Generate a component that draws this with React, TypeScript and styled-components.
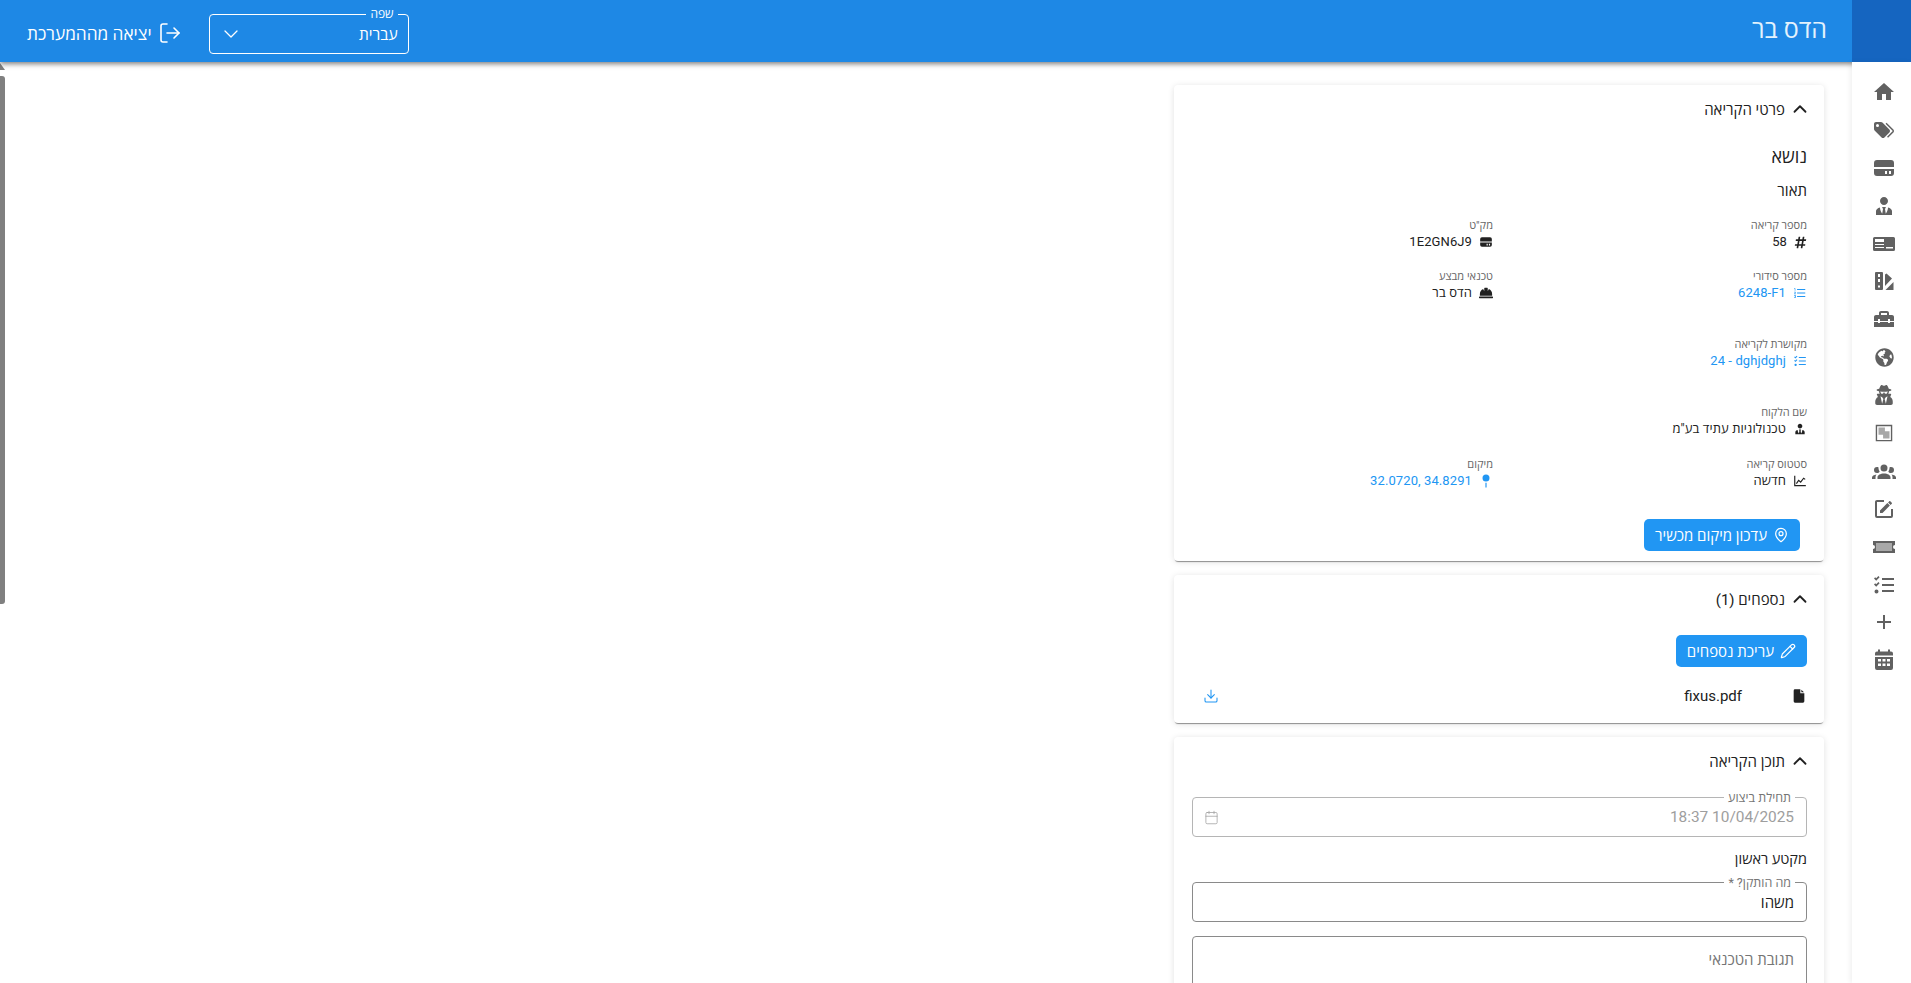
import React from "react";
import styled, { createGlobalStyle } from "styled-components";
import { ChevronDown, ChevronUp, LogOut, MapPin, Pencil, Download, Calendar } from "lucide-react";
import { FaUserSecret, FaHardHat, FaHashtag, FaGlobeAmericas } from "react-icons/fa";

const P = {
  home: "M10,20V14H14V20H19V12H22L12,3L2,12H5V20H10Z",
  tags: "M5.5,9A1.5,1.5 0 0,0 7,7.5A1.5,1.5 0 0,0 5.5,6A1.5,1.5 0 0,0 4,7.5A1.5,1.5 0 0,0 5.5,9M17.41,11.58C17.77,11.94 18,12.44 18,13C18,13.55 17.78,14.05 17.41,14.41L12.41,19.41C12.05,19.77 11.55,20 11,20C10.45,20 9.95,19.78 9.58,19.41L2.59,12.42C2.22,12.05 2,11.55 2,11V6C2,4.89 2.89,4 4,4H9C9.55,4 10.05,4.22 10.41,4.58L17.41,11.58M13.54,5.71L14.54,4.71L21.41,11.58C21.78,11.94 22,12.45 22,13C22,13.55 21.78,14.05 21.42,14.41L16.04,19.79L15.04,18.79L20.75,13L13.54,5.71Z",
  disk: "M5,4H19A3,3 0 0,1 22,7V11H2V7A3,3 0 0,1 5,4ZM2,13H22V17A3,3 0 0,1 19,20H5A3,3 0 0,1 2,17ZM13,15V18H15V15ZM17,15V18H19V15Z",
  tie: "M12 3C14.21 3 16 4.79 16 7S14.21 11 12 11 8 9.21 8 7 9.79 3 12 3M16 13.54C16 14.6 15.72 17.07 13.81 19.83L13 15L13.94 13.12C13.32 13.05 12.67 13 12 13S10.68 13.05 10.06 13.12L11 15L10.19 19.83C8.28 17.07 8 14.6 8 13.54C5.61 14.24 4 15.5 4 17V21H20V17C20 15.5 18.4 14.24 16 13.54Z",
  device: "M2.5,5H21.5A1.5,1.5 0 0,1 23,6.5V17.5A1.5,1.5 0 0,1 21.5,19H2.5A1.5,1.5 0 0,1 1,17.5V6.5A1.5,1.5 0 0,1 2.5,5ZM3,7V10H12V7ZM3,12V13H12V12ZM3,15V16H12V15ZM14,15V16.5H21V15Z",
  swatch: "M4,3H10A1,1 0 0,1 11,4V20A1,1 0 0,1 10,21H4A1,1 0 0,1 3,20V4A1,1 0 0,1 4,3ZM6,5V8H8V5ZM6,10V13H8V10ZM6,16.5V18.5H8V16.5ZM13,5.5L14.5,4.5L20,9.5L13,17ZM21.5,13V21H13.5Z",
  toolbox: "M18 16H16V15H8V16H6V15H2V20H22V15H18V16M20 8H17V6C17 4.9 16.1 4 15 4H9C7.9 4 7 4.9 7 6V8H4C2.9 8 2 8.9 2 10V14H6V12H8V14H16V12H18V14H22V10C22 8.9 21.1 8 20 8M15 8H9V6H15V8Z",
  frame: "M3,3H21V21H3ZM4.5,4.5V19.5H19.5V4.5Z",
  frameFill: "M6,6H13V10H18V18H11V14H6Z",
  group: "M12,5.5A3.5,3.5 0 0,1 15.5,9A3.5,3.5 0 0,1 12,12.5A3.5,3.5 0 0,1 8.5,9A3.5,3.5 0 0,1 12,5.5M5,8C5.56,8 6.08,8.15 6.53,8.42C6.38,9.85 6.8,11.27 7.66,12.38C7.16,13.34 6.16,14 5,14A3,3 0 0,1 2,11A3,3 0 0,1 5,8M19,8A3,3 0 0,1 22,11A3,3 0 0,1 19,14C17.84,14 16.84,13.34 16.34,12.38C17.2,11.27 17.62,9.85 17.47,8.42C17.92,8.15 18.44,8 19,8M5.5,18.25C5.5,16.18 8.41,14.5 12,14.5C15.59,14.5 18.5,16.18 18.5,18.25V20H5.5V18.25M0,20V18.5C0,17.11 1.89,15.94 4.45,15.6C3.86,16.28 3.5,17.22 3.5,18.25V20H0M24,20H20.5V18.25C20.5,17.22 20.14,16.28 19.55,15.6C22.11,15.94 24,17.11 24,18.5V20Z",
  edit: "M5,3C3.89,3 3,3.89 3,5V19A2,2 0 0,0 5,21H19A2,2 0 0,0 21,19V12H19V19H5V5H12V3H5M17.78,4C17.61,4 17.43,4.07 17.3,4.2L16.08,5.41L18.58,7.91L19.8,6.7C20.06,6.44 20.06,6 19.8,5.75L18.25,4.2C18.12,4.07 17.95,4 17.78,4M15.37,6.12L8,13.5V16H10.5L17.87,8.62L15.37,6.12Z",
  ticket: "M1,6H23V10A2,2 0 0,0 23,14V18H1V14A2,2 0 0,0 1,10ZM4,8V16H20V8Z",
  ticketFill: "M4,8H20V16H4Z",
  checks: "M2,5.5L3.2,4.3L4.2,5.3L6.4,3L7.6,4.2L4.2,7.7ZM2,11.5L3.2,10.3L4.2,11.3L6.4,9L7.6,10.2L4.2,13.7ZM4.5,16.5A2,2 0 1,1 4.5,20.5A2,2 0 1,1 4.5,16.5ZM10,5H22V7H10ZM10,11H22V13H10ZM10,17H22V19H10Z",
  plus: "M19,13H13V19H11V13H5V11H11V5H13V11H19V13Z",
  calendar: "M6,1.5H8V3.5H16V1.5H18V3.5H19A2,2 0 0,1 21,5.5V7.5H3V5.5A2,2 0 0,1 5,3.5H6ZM3,9H21V20A2,2 0 0,1 19,22H5A2,2 0 0,1 3,20ZM6,11V13.5H9V11ZM10.5,11V13.5H13.5V11ZM15,11V13.5H18V11ZM6,15.5V18H9V15.5ZM10.5,15.5V18H13.5V15.5ZM15,15.5V18H18V15.5Z",
  numbered: "M7,13V11H21V13H7M7,19V17H21V19H7M7,7V5H21V7H7M3,8V5H2V4H4V8H3M2,17V16H5V20H2V19H4V18.5H3V17.5H4V17H2M4.25,10A0.75,0.75 0 0,1 5,10.75C5,10.95 4.92,11.14 4.79,11.27L3.12,13H5V14H2V13.08L4,11H2V10H4.25Z",
  chart: "M2,3H4V19H22V21H2ZM5,16L9.5,9.5L13,12.5L18,6L21.5,8.5L20.3,10L18.4,8.7L13.3,15.3L9.9,12.4L6.6,17Z",
  pin: "M12,1A6,6 0 1,1 12,13A6,6 0 1,1 12,1ZM11,15H13V23H11Z",
  file: "M6,2H14V8H20V20A2,2 0 0,1 18,22H6A2,2 0 0,1 4,20V4A2,2 0 0,1 6,2ZM15.5,2.5L19.5,6.5H15.5Z",
};

const Glyph = ({ d, d2, size = 24 }: { d: string; d2?: string; size?: number }) => (
  <svg width={size} height={size} viewBox="0 0 24 24" fill="currentColor" fillRule="evenodd" aria-hidden="true">
    <path d={d} />
    {d2 ? <path d={d2} opacity={0.55} /> : null}
  </svg>
);

const GlobalStyle = createGlobalStyle`
  html, body { margin: 0; padding: 0; height: 100%; overflow: hidden; background: #fff; }
  body { font-family: Roboto, "Noto Sans", "Open Sans", "Liberation Sans", sans-serif; }
  * { box-sizing: border-box; }
`;

const Page = styled.div`
  direction: rtl;
  position: relative;
  width: 1911px;
  height: 983px;
  overflow: hidden;
  display: flex;
  flex-direction: column;
`;

const TopBar = styled.header`
  height: 62px;
  flex: none;
  background: #1e88e5;
  display: flex;
  align-items: stretch;
  box-shadow: 0 2px 5px rgba(0, 0, 0, 0.5);
  position: relative;
  z-index: 2;
  color: #fff;
`;

const Corner = styled.div`
  width: 59px;
  flex: none;
  background: #1565c0;
`;

const UserName = styled.h1`
  margin: 0 0 2px;
  padding: 0 25px 0 0;
  flex: 1;
  align-self: center;
  font-size: 25px;
  line-height: 58px;
  font-weight: 400;
  color: #e3f2fd;
`;

const LangSelect = styled.div`
  position: relative;
  width: 200px;
  height: 40px;
  margin: 14px 0 0 0;
  border: 1px solid #fff;
  border-radius: 4px;
  display: flex;
  align-items: center;
  justify-content: space-between;
  padding: 0 10px 0 9px;
  font-size: 15.5px;
`;

const LangLabel = styled.span`
  position: absolute;
  top: -8px;
  right: 10px;
  padding: 0 4px;
  font-size: 12px;
  line-height: 14px;
  background: #1e88e5;
`;

const Logout = styled.button`
  all: unset;
  display: flex;
  align-items: center;
  gap: 6px;
  margin: 4px 27px 0 27px;
  font: 400 17.3px Roboto, "Noto Sans", "Open Sans", sans-serif;
  color: #fff;
`;

const Body = styled.div`
  flex: 1;
  display: flex;
  min-height: 0;
`;

const Rail = styled.nav`
  width: 59px;
  flex: none;
  position: relative;
  z-index: 3;
  background: #fff;
  display: flex;
  flex-direction: column;
  align-items: center;
  gap: 11.9px;
  padding: 17px 0 0 5px;
  color: #616161;
  box-shadow: -2px 0 5px rgba(0, 0, 0, 0.06);
`;

const RailIcon = styled.span`
  width: 26px;
  height: 26px;
  display: flex;
  align-items: center;
  justify-content: center;
`;

const Content = styled.main`
  margin-right: 28px;
  padding-top: 23px;
  width: 650px;
  display: flex;
  flex-direction: column;
  gap: 14px;
`;

const Card = styled.section`
  background: #fff;
  border-radius: 4px;
  box-shadow: 0 2px 1px -1px rgba(0, 0, 0, 0.4), 0 1px 6px rgba(0, 0, 0, 0.12);
  padding: 0 17px 0 18px;
`;

const CardHead = styled.div`
  height: 50px;
  padding-bottom: 2px;
  display: flex;
  align-items: center;
  gap: 4px;
  font-size: 15px;
  color: #212121;
  & > svg {
    margin-right: -4px;
  }
`;

const Subject = styled.div`
  font-size: 18px;
  line-height: 26px;
  margin-top: 9px;
  color: #212121;
`;

const Descr = styled.div`
  font-size: 15px;
  line-height: 20px;
  margin-top: 11px;
  color: #212121;
`;

const Grid = styled.div`
  display: grid;
  grid-template-columns: 314px 314px;
  margin-top: 17px;
`;

const Item = styled.div<{ $h: number }>`
  height: ${(p) => p.$h}px;
`;

const ItemLabel = styled.div`
  font-size: 11px;
  line-height: 15px;
  color: #666;
`;

const ItemValue = styled.div<{ $link?: boolean }>`
  display: flex;
  align-items: center;
  gap: 7px;
  font-size: 13px;
  line-height: 18px;
  letter-spacing: 0.1px;
  color: ${(p) => (p.$link ? "#2196f3" : "#212121")};
`;

const Ltr = styled.span`
  direction: ltr;
  unicode-bidi: isolate;
`;

const PrimaryButton = styled.button`
  all: unset;
  height: 32px;
  padding: 0 11px;
  display: inline-flex;
  align-items: center;
  gap: 6px;
  border-radius: 5px;
  background: #2196f3;
  color: #fff;
  font: 500 15px Roboto, "Noto Sans", "Open Sans", sans-serif;
`;

const ButtonRow = styled.div<{ $inset?: number; $top: number; $bottom: number }>`
  padding: ${(p) => p.$top}px ${(p) => p.$inset ?? 0}px ${(p) => p.$bottom}px 0;
  display: flex;
`;

const FileRow = styled.div`
  display: flex;
  align-items: center;
  height: 20px;
  font-size: 15px;
  color: #212121;
`;

const FileName = styled.span`
  margin-right: 49px;
  direction: ltr;
`;

const DownloadBtn = styled.span`
  margin-right: auto;
  margin-left: 11px;
  color: #2196f3;
  display: flex;
`;

const FileSpacer = styled.div`
  height: 17px;
`;

const Fields = styled.div`
  padding-top: 10px;
`;

const Field = styled.div<{ $muted?: boolean; $h?: number; $mt: number }>`
  position: relative;
  height: ${(p) => p.$h ?? 40}px;
  margin-top: ${(p) => p.$mt}px;
  border: 1px solid ${(p) => (p.$muted ? "#b5b5b5" : "#8a8a8a")};
  border-radius: 4px;
  padding: 0 12px 0 11px;
  display: flex;
  align-items: center;
  justify-content: space-between;
  font-size: ${(p) => (p.$muted ? 15.4 : 15)}px;
  color: ${(p) => (p.$muted ? "#9e9e9e" : "#212121")};
`;

const FieldLabel = styled.span`
  position: absolute;
  top: -7px;
  right: 11px;
  padding: 0 4px;
  font-size: 12.5px;
  line-height: 13px;
  background: #fff;
  color: #757575;
`;

const Placeholder = styled.span`
  align-self: flex-start;
  margin-top: 12px;
  color: #757575;
`;

const SectionTitle = styled.div`
  font-size: 14.5px;
  line-height: 20px;
  margin-top: 13px;
  color: #212121;
`;

const ScrollThumb = styled.div`
  position: absolute;
  left: 0;
  top: 76px;
  width: 5px;
  height: 528px;
  background: #808080;
  border-radius: 0 3px 3px 0;
`;

const ScrollArrow = styled.div`
  position: absolute;
  left: 0;
  top: 63px;
  width: 0;
  height: 0;
  border-right: 5px solid transparent;
  border-bottom: 7px solid #808080;
`;

const rail: React.ReactNode[] = [
  <Glyph d={P.home} key="home" />,
  <Glyph d={P.tags} key="tags" />,
  <Glyph d={P.disk} key="disk" />,
  <Glyph d={P.tie} key="tie" />,
  <Glyph d={P.device} key="device" />,
  <Glyph d={P.swatch} key="swatch" />,
  <Glyph d={P.toolbox} key="toolbox" />,
  <FaGlobeAmericas size={19} key="globe" />,
  <FaUserSecret size={20} key="spy" />,
  <Glyph d={P.frame} d2={P.frameFill} key="frame" size={22} />,
  <Glyph d={P.group} key="group" />,
  <Glyph d={P.edit} key="edit" />,
  <Glyph d={P.ticket} d2={P.ticketFill} key="ticket" />,
  <Glyph d={P.checks} key="checks" />,
  <Glyph d={P.plus} key="plus" />,
  <Glyph d={P.calendar} key="cal" />,
];

export default function App() {
  return (
    <Page>
      <GlobalStyle />
      <TopBar>
        <Corner />
        <UserName>הדס בר</UserName>
        <LangSelect>
          <LangLabel>שפה</LangLabel>
          <span>עברית</span>
          <ChevronDown size={24} strokeWidth={1.3} />
        </LangSelect>
        <Logout>
          <LogOut size={24} strokeWidth={1.6} />
          יציאה מההמערכת
        </Logout>
      </TopBar>
      <Body>
        <Rail>
          {rail.map((icon, i) => (
            <RailIcon key={i}>{icon}</RailIcon>
          ))}
        </Rail>
        <Content>
          <Card>
            <CardHead>
              <ChevronUp size={22} strokeWidth={2} />
              פרטי הקריאה
            </CardHead>
            <Subject>נושא</Subject>
            <Descr>תאור</Descr>
            <Grid>
              <Item $h={51}>
                <ItemLabel>מספר קריאה</ItemLabel>
                <ItemValue><FaHashtag size={13} />58</ItemValue>
              </Item>
              <Item $h={51}>
                <ItemLabel>מק"ט</ItemLabel>
                <ItemValue><Glyph d={P.disk} size={14} />1E2GN6J9</ItemValue>
              </Item>
              <Item $h={68}>
                <ItemLabel>מספר סידורי</ItemLabel>
                <ItemValue $link><Glyph d={P.numbered} size={14} /><Ltr>6248-F1</Ltr></ItemValue>
              </Item>
              <Item $h={68}>
                <ItemLabel>טכנאי מבצע</ItemLabel>
                <ItemValue><FaHardHat size={14} />הדס בר</ItemValue>
              </Item>
              <Item $h={68}>
                <ItemLabel>מקושרת לקריאה</ItemLabel>
                <ItemValue $link><Glyph d={P.checks} size={14} /><Ltr>24 - dghjdghj</Ltr></ItemValue>
              </Item>
              <Item $h={68} />
              <Item $h={52}>
                <ItemLabel>שם הלקוח</ItemLabel>
                <ItemValue><Glyph d={P.tie} size={14} />טכנולוגיות עתיד בע"מ</ItemValue>
              </Item>
              <Item $h={52} />
              <Item $h={62}>
                <ItemLabel>סטטוס קריאה</ItemLabel>
                <ItemValue><Glyph d={P.chart} size={14} />חדשה</ItemValue>
              </Item>
              <Item $h={62}>
                <ItemLabel>מיקום</ItemLabel>
                <ItemValue $link><Glyph d={P.pin} size={14} /><Ltr>32.0720, 34.8291</Ltr></ItemValue>
              </Item>
            </Grid>
            <ButtonRow $inset={7} $top={0} $bottom={10}>
              <PrimaryButton><MapPin size={16} strokeWidth={1.8} />עדכון מיקום מכשיר</PrimaryButton>
            </ButtonRow>
          </Card>
          <Card>
            <CardHead>
              <ChevronUp size={22} strokeWidth={2} />
              נספחים (1)
            </CardHead>
            <ButtonRow $top={10} $bottom={19}>
              <PrimaryButton><Pencil size={16} strokeWidth={1.8} />עריכת נספחים</PrimaryButton>
            </ButtonRow>
            <FileRow>
              <Glyph d={P.file} size={16} />
              <FileName>fixus.pdf</FileName>
              <DownloadBtn><Download size={16} strokeWidth={1.6} /></DownloadBtn>
            </FileRow>
            <FileSpacer />
          </Card>
          <Card>
            <CardHead>
              <ChevronUp size={22} strokeWidth={2} />
              תוכן הקריאה
            </CardHead>
            <Fields>
              <Field $muted $mt={0}>
                <FieldLabel>תחילת ביצוע</FieldLabel>
                <span>10/04/2025 18:37</span>
                <Calendar size={15} strokeWidth={1.2} />
              </Field>
              <SectionTitle>מקטע ראשון</SectionTitle>
              <Field $mt={12}>
                <FieldLabel>מה הותקן? *</FieldLabel>
                <span>משהו</span>
              </Field>
              <Field $mt={14} $h={90}>
                <Placeholder>תגובת הטכנאי</Placeholder>
              </Field>
            </Fields>
          </Card>
        </Content>
      </Body>
      <ScrollArrow />
      <ScrollThumb />
    </Page>
  );
}
